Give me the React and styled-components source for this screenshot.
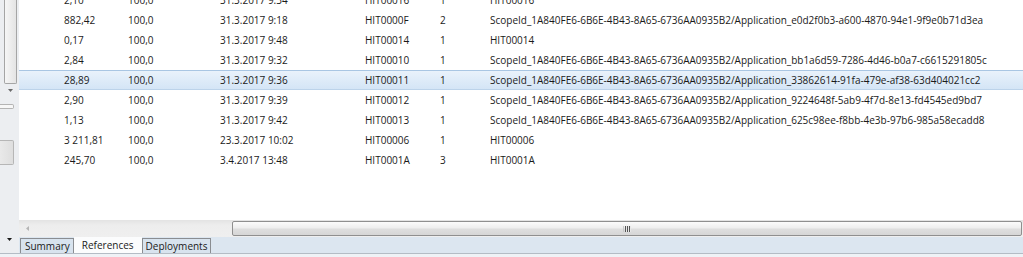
import React from "react";
import styled, { createGlobalStyle } from "styled-components";

const GlobalStyle = createGlobalStyle`
  html, body { margin: 0; padding: 0; background: #ffffff; }
  body { font-family: "Open Sans", "Noto Sans", sans-serif; }
`;

const Window = styled.div`
  width: 1023px;
  height: 257px;
  display: flex;
  flex-direction: column;
  overflow: hidden;
  font-family: "Open Sans", "Noto Sans", sans-serif;
  font-size: 10px;
  color: #1a1a1a;
`;

const Body = styled.div`
  flex: 1;
  display: flex;
  min-height: 0;
`;

const Rail = styled.div`
  width: 19px;
  flex: none;
  background: #eceef1;
  display: flex;
  flex-direction: column;
  align-items: flex-start;
`;

const RailThumb = styled.div`
  margin-left: 4px;
  width: 11px;
  height: 83px;
  border: 1px solid #a5a5a5;
  border-top: none;
  border-radius: 0 0 2px 2px;
  background: linear-gradient(90deg, #f6f6f6, #e4e4e4);
`;

const RailArrow = styled.svg`
  margin: ${(p) => p.$m};
  flex: none;
`;

const RailBar = styled.div`
  margin-top: 12px;
  width: 13px;
  height: 3px;
  border: 1px solid #b4b4b4;
  border-left: none;
  border-radius: 0 2px 2px 0;
  background: #f7f7f7;
`;

const RailBox = styled.div`
  margin-top: 31px;
  width: 13px;
  height: 23px;
  border: 1px solid #b6b6b6;
  border-left: none;
  border-radius: 0 2px 2px 0;
  background: linear-gradient(90deg, #e9e9e9, #dedede);
`;

const Main = styled.div`
  flex: 1;
  display: flex;
  flex-direction: column;
  min-width: 0;
`;

const TableArea = styled.div`
  flex: 1;
  background: #ffffff;
  overflow: hidden;
`;

const Rows = styled.div`
  margin-top: -10px;
`;

const Row = styled.div`
  display: grid;
  grid-template-columns: 64px 92px 145px 75px 50px 1fr;
  padding-left: 45px;
  height: 20px;
  box-sizing: border-box;
  align-items: center;
  line-height: 18px;
  white-space: nowrap;
  border-top: 1px solid ${(p) => (p.$selected ? "#a9c6e3" : "transparent")};
  border-bottom: 1px solid ${(p) => (p.$selected ? "#bcd3ea" : "transparent")};
  background: ${(p) =>
    p.$selected ? "linear-gradient(#e9f2fb, #d4e5f6)" : "transparent"};
`;

const Cell = styled.div`
  overflow: hidden;
`;

const HScroll = styled.div`
  height: 17px;
  flex: none;
  display: flex;
  align-items: center;
  background: linear-gradient(#e3e3e3, #ededed 30%, #efefef);
`;

const ArrowButton = styled.div`
  width: 17px;
  height: 17px;
  display: flex;
  align-items: center;
  justify-content: center;
  flex: none;
`;

const Track = styled.div`
  flex: 1;
  height: 100%;
  display: flex;
  align-items: center;
  padding-left: 196px;
`;

const Thumb = styled.div`
  flex: 1;
  height: 13px;
  border: 1px solid #8f8f8f;
  border-radius: 2px;
  background: linear-gradient(#fbfbfb, #eeeeee 45%, #dedede 55%, #d6d6d6);
  display: flex;
  align-items: center;
  justify-content: center;
  margin-right: 1px;
`;

const TabStrip = styled.div`
  height: 16px;
  flex: none;
  display: flex;
  align-items: stretch;
  background: #dce6f0;
`;

const Tab = styled.div`
  box-sizing: border-box;
  height: ${(p) => (p.$active ? "16px" : "15px")};
  margin-top: ${(p) => (p.$active ? "0" : "1px")};
  padding: 0 ${(p) => (p.$active ? "8px" : "3px")};
  padding-left: ${(p) => (p.$first ? "4px" : undefined)};
  margin-left: ${(p) => (p.$first ? "1px" : "0")};
  display: flex;
  align-items: center;
  line-height: 14px;
  color: #1a1a1a;
  background: ${(p) => (p.$active ? "#fbfcfd" : "#d8e3ee")};
  border: ${(p) => (p.$active ? "none" : "1px solid #8a8d91")};
  border-bottom: none;
`;

const Footer = styled.div`
  height: 3px;
  flex: none;
  border-top: 1px solid #b4bcc5;
  background: #eff2f6;
`;

const BottomRail = styled.div`
  width: 19px;
  flex: none;
  display: flex;
  justify-content: center;
  padding-top: 1px;
  background: #eceef1;
`;

const Grip = () => (
  <svg width="9" height="6" viewBox="0 0 9 6">
    <rect x="0" y="0" width="1" height="6" fill="#c8c8c8" />
    <rect x="2" y="0" width="1" height="6" fill="#555" />
    <rect x="4" y="0" width="1" height="6" fill="#555" />
    <rect x="6" y="0" width="1" height="6" fill="#555" />
    <rect x="3" y="0" width="1" height="6" fill="#e8e8e8" />
    <rect x="5" y="0" width="1" height="6" fill="#e8e8e8" />
    <rect x="7" y="0" width="1" height="6" fill="#e8e8e8" />
  </svg>
);

const SCOPE = "ScopeId_1A840FE6-6B6E-4B43-8A65-6736AA0935B2/Application_";

const rows = [
  ["2,10", "100,0", "31.3.2017 9:34", "HIT00016", "1", "HIT00016"],
  ["882,42", "100,0", "31.3.2017 9:18", "HIT0000F", "2", SCOPE + "e0d2f0b3-a600-4870-94e1-9f9e0b71d3ea"],
  ["0,17", "100,0", "31.3.2017 9:48", "HIT00014", "1", "HIT00014"],
  ["2,84", "100,0", "31.3.2017 9:32", "HIT00010", "1", SCOPE + "bb1a6d59-7286-4d46-b0a7-c6615291805c"],
  ["28,89", "100,0", "31.3.2017 9:36", "HIT00011", "1", SCOPE + "33862614-91fa-479e-af38-63d404021cc2"],
  ["2,90", "100,0", "31.3.2017 9:39", "HIT00012", "1", SCOPE + "9224648f-5ab9-4f7d-8e13-fd4545ed9bd7"],
  ["1,13", "100,0", "31.3.2017 9:42", "HIT00013", "1", SCOPE + "625c98ee-f8bb-4e3b-97b6-985a58ecadd8"],
  ["3 211,81", "100,0", "23.3.2017 10:02", "HIT00006", "1", "HIT00006"],
  ["245,70", "100,0", "3.4.2017 13:48", "HIT0001A", "3", "HIT0001A"],
];

const SELECTED = 4;

export default function App() {
  return (
    <>
      <GlobalStyle />
      <Window>
        <Body>
          <Rail>
            <RailThumb />
            <RailArrow $m="5px 0 0 8px" width="5" height="3" viewBox="0 0 5 3">
              <path d="M0 0H5L2.5 3Z" fill="#6a6a6a" />
            </RailArrow>
            <RailBar />
            <RailBox />
          </Rail>
          <Main>
            <TableArea>
              <Rows>
                {rows.map((r, i) => (
                  <Row key={i} $selected={i === SELECTED}>
                    {r.map((c, j) => (
                      <Cell key={j}>{c}</Cell>
                    ))}
                  </Row>
                ))}
              </Rows>
            </TableArea>
            <HScroll>
              <ArrowButton>
                <svg width="3" height="5" viewBox="0 0 3 5">
                  <path d="M3 0V5L0 2.5Z" fill="#b5b5b5" />
                </svg>
              </ArrowButton>
              <Track>
                <Thumb>
                  <Grip />
                </Thumb>
              </Track>
            </HScroll>
          </Main>
        </Body>
        <TabStrip>
          <BottomRail>
            <svg width="5" height="3" viewBox="0 0 5 3">
              <path d="M0 0H5L2.5 3Z" fill="#1a1a1a" />
            </svg>
          </BottomRail>
          <Tab $first>Summary</Tab>
          <Tab $active>References</Tab>
          <Tab>Deployments</Tab>
        </TabStrip>
        <Footer />
      </Window>
    </>
  );
}
